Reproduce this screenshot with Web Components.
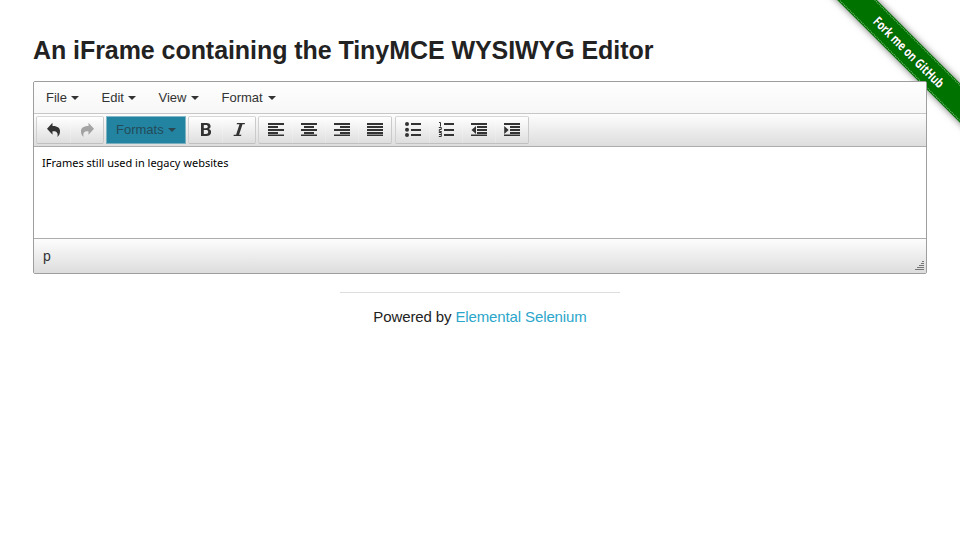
<!DOCTYPE html>
<html lang="en">
<head>
<meta charset="utf-8">
<title>The Internet</title>
<style>
html,body{margin:0;height:100%;overflow:hidden;background:#fff}
body{font-family:"Liberation Sans",Arial,sans-serif;color:#222}
</style>
</head>
<body>
<demo-page></demo-page>
<script>
const define = (name, html, setup) => customElements.define(name, class extends HTMLElement {
  constructor() {
    super();
    this.attachShadow({mode: 'open'}).innerHTML = html;
    if (setup) setup(this, this.shadowRoot);
  }
});

const ICONS = {
  undo: '<path d="M6.500 1.800v3.200c5.300-.1 7.600 2.300 7.500 5.400 0 2.200-.8 4-2.600 5.600.9-4-.4-5.900-4.900-5.700v3.500L1 7.800z"/>',
  redo: '<path d="M9.500 1.800v3.200c-5.300-.1-7.600 2.300-7.500 5.400 0 2.200.8 4 2.600 5.600-.9-4 .4-5.900 4.900-5.700v3.500L15 7.800z"/>',
  bold: '<path fill-rule="evenodd" d="M3 2h5.400c2.700 0 4.200 1.200 4.200 3.300 0 1.300-.7 2.300-1.900 2.700 1.600.4 2.400 1.500 2.400 3 0 2.500-1.700 4-4.700 4H3zm2.800 2v3.200h2c1.300 0 2-.6 2-1.600S9.100 4 7.800 4zm0 5v3.900h2.200c1.500 0 2.200-.7 2.200-2s-.8-1.900-2.200-1.900z"/>',
  italic: '<path d="M6 2h8l-.3 1.200h-2.200L8.100 13.800h2.300L10 15H2.500l.3-1.200h2.300L8.500 3.200H5.700z"/>',
  left: '<path d="M0 2h16v2H0zM0 5h10v2H0zM0 8h16v2H0zM0 11h10v2H0zM0 13.500h16v1.500H0z"/>',
  center: '<path d="M0 2h16v2H0zM3 5h10v2H3zM0 8h16v2H0zM3 11h10v2H3zM0 13.500h16v1.500H0z"/>',
  right: '<path d="M0 2h16v2H0zM6 5h10v2H6zM0 8h16v2H0zM6 11h10v2H6zM0 13.500h16v1.500H0z"/>',
  justify: '<path d="M0 2h16v2H0zM0 5h16v2H0zM0 8h16v2H0zM0 11h16v2H0zM0 13.500h16v1.500H0z"/>',
  bullets: '<path d="M6 2h10v2H6zM6 8h10v2H6zM6 13h10v2H6z"/><circle cx="2" cy="3" r="2"/><circle cx="2" cy="8.700" r="2"/><circle cx="2" cy="14" r="2"/>',
  numbers: '<path d="M6 2h10v2H6zM6 8h10v2H6zM6 13h10v2H6z"/><path fill="none" stroke="#333" d="M1 1.500h1.500V5.500M.8 6.500h2.500v2h-2v2h2.500M.8 11.500h2.500v4h-2.500M1 13.500h2"/>',
  outdent: '<path d="M0 2h16v2H0zM6 5h10v2H6zM6 8h10v2H6zM6 11h10v2H6zM0 13.500h16v1.500H0zM5 5v8L.5 9z"/>',
  indent: '<path d="M0 2h16v2H0zM6 5h10v2H6zM6 8h10v2H6zM6 11h10v2H6zM0 13.500h16v1.500H0zM.2 5v8l4.500-4z"/>'
};

define('tool-button', `<style>
:host{display:flex;width:33px;height:26px;align-items:center;justify-content:center;color:#333}
:host([disabled]){color:rgba(51,51,51,.4)}
:host(:not(:last-child)){box-shadow:1px 0 0 rgba(255,255,255,.2)}
svg{width:16px;height:16px;fill:currentColor;display:block}
</style><svg viewBox="0 1 16 16"></svg>`, (el, root) => {
  root.querySelector('svg').innerHTML = ICONS[el.getAttribute('icon')];
});

define('button-group', `<style>
:host{display:flex;box-sizing:border-box;height:28px;border:1px solid;border-color:#d8d8d8 #cacaca #c0c0c0 #d0d0d0;border-radius:2px;
background:linear-gradient(#fff,#dedede)}
:host(:last-child){margin-left:1px}
</style><slot></slot>`);

define('drop-label', `<style>
:host{display:flex;box-sizing:border-box;align-items:center;justify-content:space-between;font-size:13px;line-height:20px;color:#333;padding:0 10.5px 0 12px;white-space:nowrap}
:host([filled]){width:80px;height:28px;padding:0 9px;background:#2284a1;background-clip:padding-box;border:1px solid rgba(34,132,161,.55);color:#234b59}
i{border:4px solid transparent;border-top-color:#333;border-bottom:0}
:host([filled]) i{border-top-color:#2b4650}
</style><span><slot></slot></span><i></i>`, (el) => {
  const w = el.getAttribute('width');
  if (w) el.style.width = w + 'px';
});

define('menu-bar', `<style>
:host{display:flex;height:31px;border-bottom:1px solid #c6c6c6;background:linear-gradient(#fefefe,#f7f7f7)}
</style><slot></slot>`);

define('tool-bar', `<style>
:host{display:flex;box-sizing:border-box;height:33px;gap:2px;padding:2px;border-bottom:1px solid #adadad;background:linear-gradient(#fdfdfd,#dddddd)}
</style><slot></slot>`);

define('edit-area', `<style>
:host{display:block;box-sizing:border-box;height:91px;padding:8px;background:#fff;color:#000;font:11px/16px "Noto Sans",Verdana,sans-serif}
p{margin:0}span{display:inline-block;white-space:nowrap}
</style><p><span><slot></slot></span></p>`);

define('status-bar', `<style>
:host{display:flex;box-sizing:border-box;height:35px;justify-content:space-between;align-items:flex-end;border-top:1px solid #adadad;background:linear-gradient(#fdfdfd,#dddddd);padding:0 2px 2px 9px;font-size:14px;line-height:20px;color:#333}
span{margin-bottom:5px}
svg{display:block;width:10px;height:10px;fill:#777}
</style><span><slot></slot></span><svg viewBox="0 0 10 10"><path d="M8 0h2v1H8zM7 2h3v1H7zM5 4h5v1H5zM3 6h7v1H3zM1 8h9v1H1z"/></svg>`);

define('rich-editor', `<style>
:host{display:block;position:relative;box-sizing:border-box;height:193px;border:1px solid #9e9e9e;border-radius:2px;overflow:hidden;background:#fff}
</style>
<menu-bar><drop-label width="55.5">File</drop-label><drop-label width="57">Edit</drop-label><drop-label width="63">View</drop-label><drop-label width="76.5">Format</drop-label></menu-bar>
<tool-bar>
<button-group><tool-button icon="undo"></tool-button><tool-button icon="redo" disabled></tool-button></button-group>
<drop-label filled>Formats</drop-label>
<button-group><tool-button icon="bold"></tool-button><tool-button icon="italic"></tool-button></button-group>
<button-group><tool-button icon="left"></tool-button><tool-button icon="center"></tool-button><tool-button icon="right"></tool-button><tool-button icon="justify"></tool-button></button-group>
<button-group><tool-button icon="bullets"></tool-button><tool-button icon="numbers"></tool-button><tool-button icon="outdent"></tool-button><tool-button icon="indent"></tool-button></button-group>
</tool-bar>
<edit-area>IFrames still used in legacy websites</edit-area>
<status-bar>p</status-bar>`);

define('fork-ribbon', `<style>
:host{position:absolute;top:0;right:0;width:150px;height:150px;overflow:hidden}
div{position:absolute;left:-11px;top:38px;width:220px;height:28px;box-sizing:border-box;transform:rotate(45deg);background:#007200;box-shadow:0 0 7px rgba(0,0,0,.55);
display:flex;align-items:center;justify-content:center}
div::before{content:"";position:absolute;inset:1px 0;border:1px dotted #7fc07f;border-width:1px 0}
span{color:#fff;font:700 13px/20px "Open Sans","Noto Sans",sans-serif;transform:scaleX(.77);white-space:nowrap;text-shadow:0 0 2px rgba(0,0,0,.4)}
</style><div><span>Fork me on GitHub</span></div>`);

define('page-footer', `<style>
:host{display:block;width:280px;margin:18px auto 0;border-top:1px solid #ddd;text-align:center;font-size:15px;letter-spacing:-.12px;line-height:24px;padding-top:12px;box-sizing:border-box}
a{color:#2ba6cb;text-decoration:none}
</style>Powered by <a href="#">Elemental Selenium</a>`);

define('demo-page', `<style>
:host{display:block;position:relative;height:534px;box-sizing:border-box;padding:33px 33px 0;overflow:hidden}
h1{margin:0 0 13px;font-size:25px;letter-spacing:-.06px;line-height:35px;font-weight:700;color:#222;white-space:nowrap}
</style>
<fork-ribbon></fork-ribbon>
<h1>An iFrame containing the TinyMCE WYSIWYG Editor</h1>
<rich-editor></rich-editor>
<page-footer></page-footer>`);
</script>
</body>
</html>
